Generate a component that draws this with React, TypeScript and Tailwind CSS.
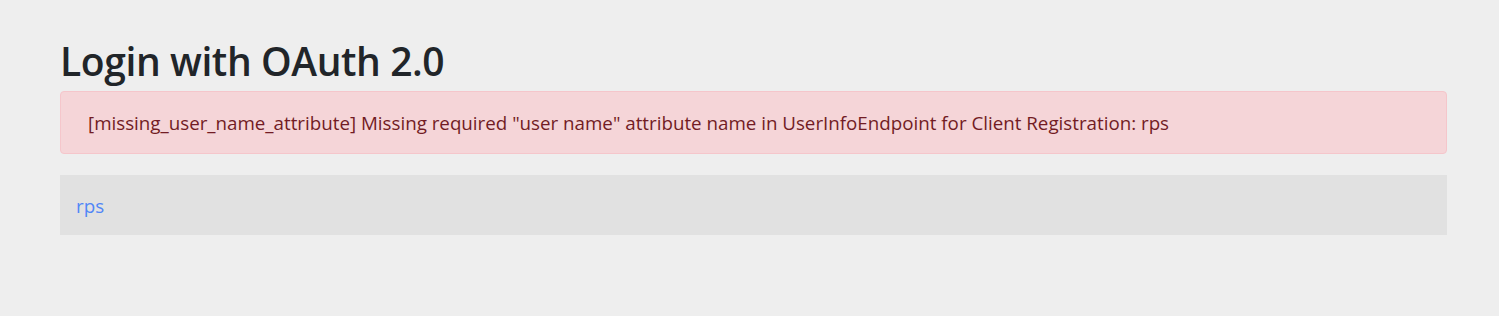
const App = () => {
  return (
    <div className="min-h-[316px] w-full bg-[#eeeeee] text-[#212529] font-['Open_Sans',sans-serif]">
      <div className="pl-[60px] pr-[52px] pt-[37px]">
        {/* heading */}
        <h2 className="text-[39px] leading-[48px] font-semibold tracking-[-0.4px] mb-[6px]">Login with OAuth 2.0</h2>

        {/* error alert */}
        <div role="alert" className="rounded-[4px] border border-[#f5c6cb] bg-[#f5d5d8] text-[#721c24] text-[18.75px] leading-[26px] pl-[27px] pr-5 py-[17.5px]">
          [missing_user_name_attribute] Missing required "user name" attribute name in UserInfoEndpoint for Client Registration: rps
        </div>

        {/* client list */}
        <table className="w-full mt-[21px]">
          <tbody>
            <tr className="bg-[#e1e1e1]">
              <td className="h-[60px] pl-4 pt-[3px] text-[18.75px]">
                <a href="#" className="text-[#5086f7]">rps</a>
              </td>
            </tr>
          </tbody>
        </table>
      </div>
    </div>
  );
};

export default App;
